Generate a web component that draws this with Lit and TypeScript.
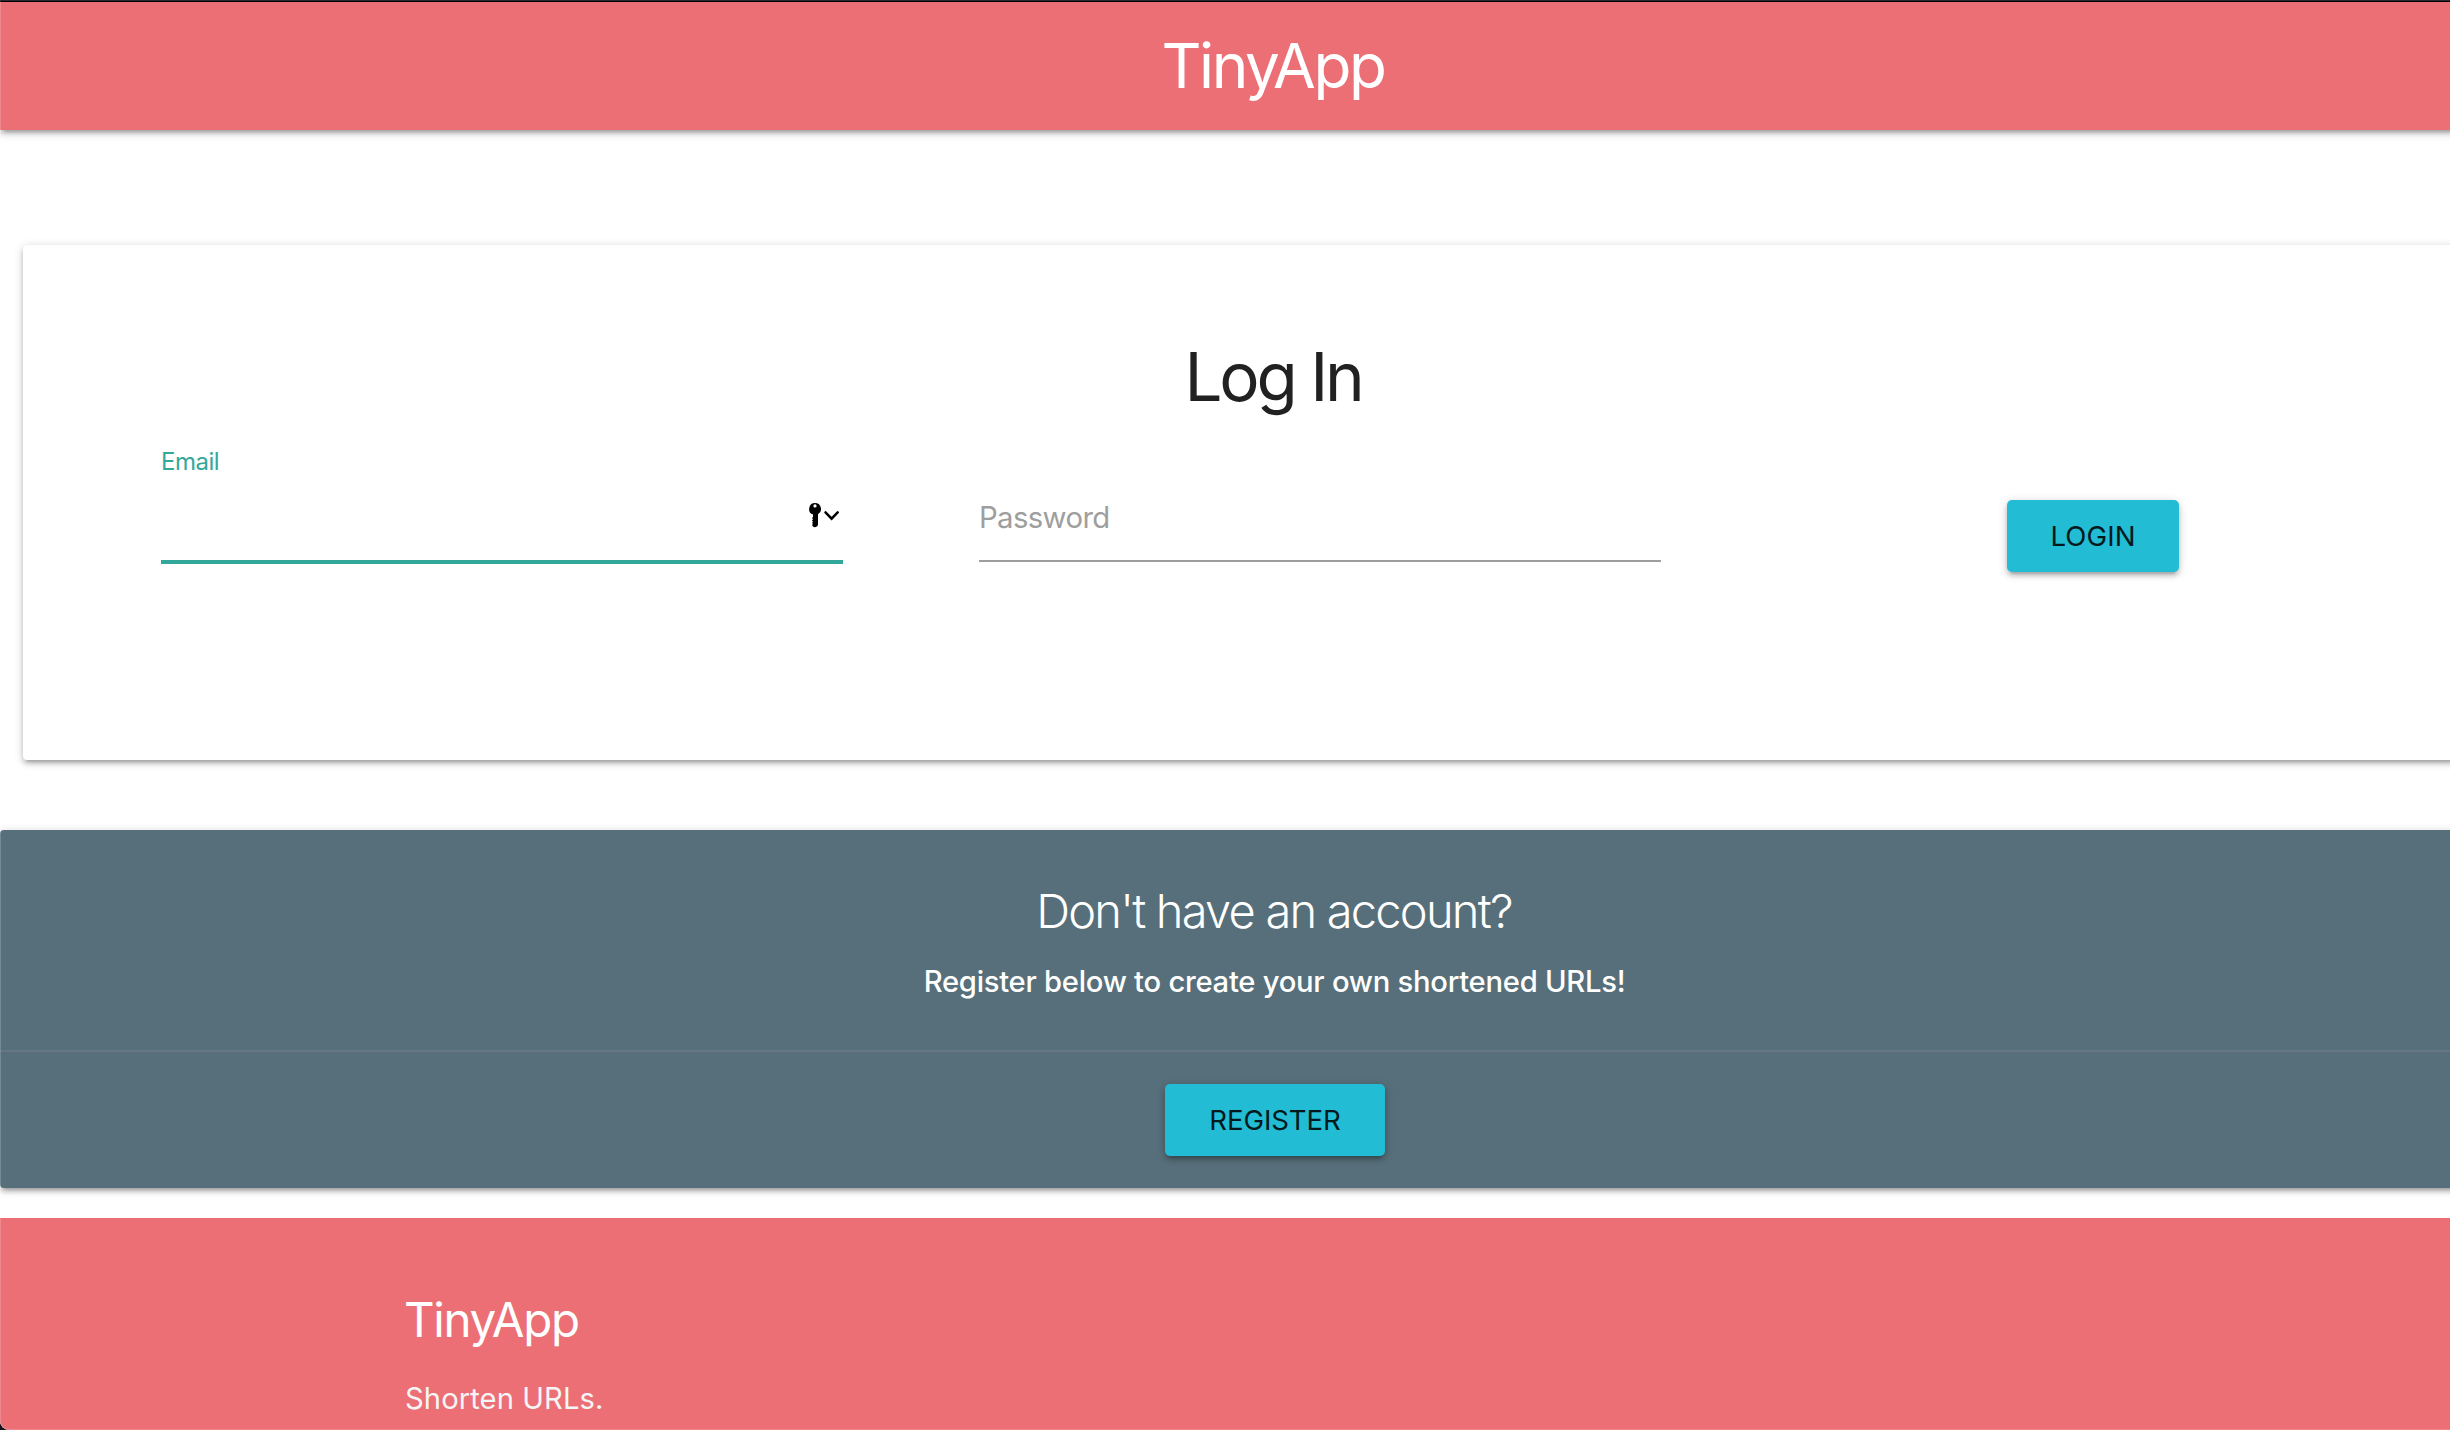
import { LitElement, html, css } from "lit";
import { customElement, property } from "lit/decorators.js";

@customElement("text-field")
export class TextField extends LitElement {
  @property() label = "";
  @property({ type: Boolean }) active = false;

  render() {
    return this.active
      ? html`<div class="field active">
          <label class="label">${this.label}</label>
          <div class="entry">
            <svg class="key" width="36" height="36" viewBox="0 0 36 36" aria-hidden="true">
              <path
                fill="#000"
                fill-rule="evenodd"
                d="M10 6a6 6 0 0 1 3 11.2V27.500a3 3 0 0 1-5.400 1.400l-.6-.8 1-1-1-1.200 1-1.200-1-1.200 1-1.200-1-1.200 1-1.200V17.600A6 6 0 0 1 10 6zm0 1.300a1.600 1.600 0 1 0 0 3.200 1.600 1.600 0 0 0 0-3.200z"
              />
              <path
                fill="none"
                stroke="#000"
                stroke-width="2.500"
                stroke-linecap="round"
                stroke-linejoin="miter"
                d="M20.500 15.300l6.100 6.300 6.100-6.300"
              />
            </svg>
          </div>
        </div>`
      : html`<div class="field">
          <label class="label">${this.label}</label>
        </div>`;
  }

  static styles = css`
    :host {
      display: block;
    }
    .field {
      box-sizing: border-box;
      height: 116px;
      padding-top: 57px;
      border-bottom: 2px solid #9e9e9e;
    }
    .label {
      display: block;
      line-height: 30px;
      font-size: 29.3px;
      letter-spacing: -0.62px;
      color: #9e9e9e;
    }
    .field.active {
      height: 118px;
      padding-top: 1px;
      border-bottom: 4px solid #32a89b;
    }
    .active .label {
      font-size: 24px;
      letter-spacing: -0.5px;
      color: #32a89b;
    }
    .entry {
      display: flex;
      justify-content: flex-end;
      padding: 20px 2px 0 0;
    }
    .key {
      display: block;
    }
  `;
}

@customElement("action-button")
export class ActionButton extends LitElement {
  render() {
    return html`<button class="btn"><slot></slot></button>`;
  }

  static styles = css`
    :host {
      display: block;
    }
    .btn {
      display: block;
      width: 100%;
      height: 72px;
      padding: 0;
      border: 0;
      border-radius: 5px;
      background: #22bcd4;
      color: #04191c;
      font: 400 27.6px/72px Inter, sans-serif;
      letter-spacing: inherit;
      text-align: center;
      box-shadow: 0 4px 4px rgba(0, 0, 0, 0.14), 0 6px 2px -4px rgba(0, 0, 0, 0.12),
        0 2px 10px rgba(0, 0, 0, 0.2);
    }
  `;
}

@customElement("app-root")
export class AppRoot extends LitElement {
  render() {
    return html`
      <div class="page">
        <header class="nav"><span class="logo">TinyApp</span></header>
        <main class="login-card">
          <h1 class="title">Log In</h1>
          <form class="row">
            <text-field label="Email" active></text-field>
            <text-field label="Password"></text-field>
            <action-button class="login">LOGIN</action-button>
          </form>
        </main>
        <section class="register-card">
          <div class="content">
            <h2 class="question">Don't have an account?</h2>
            <p class="hint">Register below to create your own shortened URLs!</p>
          </div>
          <div class="action">
            <action-button class="register">REGISTER</action-button>
          </div>
        </section>
        <footer class="footer">
          <h3 class="footer-title">TinyApp</h3>
          <p class="footer-text">Shorten URLs.</p>
        </footer>
        <div class="edge"></div>
      </div>
    `;
  }

  static styles = css`
    :host {
      display: block;
      height: 1430px;
      overflow: hidden;
      background: #14141e;
      font-family: Inter, sans-serif;
    }
    h1,
    h2,
    h3,
    p {
      margin: 0;
      font-weight: 400;
      white-space: nowrap;
    }
    .page {
      position: relative;
      box-sizing: border-box;
      display: flex;
      flex-direction: column;
      height: 1430px;
      overflow: hidden;
      border-top: 1px solid #2a2a2a;
      border-radius: 0 0 0 9px;
      background: #fff;
    }
    .nav,
    .login-card,
    .register-card,
    .footer {
      flex: none;
      box-sizing: border-box;
      width: 2548px;
    }
    .nav,
    .login-card,
    .register-card {
      box-shadow: 0 4px 4px rgba(0, 0, 0, 0.14), 0 6px 2px -4px rgba(0, 0, 0, 0.12),
        0 2px 10px rgba(0, 0, 0, 0.2);
    }
    .nav {
      height: 129px;
      padding-right: 2px;
      border-top: 1px solid #000;
      background: #ec6f75;
      text-align: center;
    }
    .logo {
      display: block;
      font-size: 62px;
      line-height: 128px;
      letter-spacing: -2.44px;
      color: #fff;
    }
    .login-card {
      height: 515px;
      margin: 115px 0 0 23px;
      padding: 82px 0 0 138px;
      border-radius: 4px;
      background: #fff;
    }
    .title {
      width: 2224px;
      font-size: 67.3px;
      line-height: 99px;
      letter-spacing: -3.25px;
      text-align: center;
      color: #212121;
    }
    .row {
      display: grid;
      grid-template-columns: 682px 682px 382px;
      column-gap: 136px;
      margin: 20px 0 0;
      align-items: start;
    }
    .login {
      width: 172px;
      margin: 54px 0 0 210px;
      letter-spacing: 0.1px;
    }
    .register-card {
      height: 358px;
      margin-top: 70px;
      border-radius: 4px;
      background: #576f7a;
      color: #fff;
      text-align: center;
    }
    .content {
      box-sizing: border-box;
      height: 220px;
      padding-top: 49px;
    }
    .question {
      font-size: 47px;
      font-weight: 300;
      line-height: 64px;
      letter-spacing: -1.77px;
    }
    .hint {
      margin-top: 16px;
      padding-left: 1px;
      font-size: 29.2px;
      font-weight: 500;
      line-height: 45px;
      letter-spacing: -0.26px;
    }
    .action {
      display: flex;
      justify-content: center;
      padding: 32px 0 32px 2px;
      border-top: 2px solid rgba(160, 160, 160, 0.2);
    }
    .register {
      width: 220px;
      letter-spacing: -0.1px;
    }
    .footer {
      flex: 1;
      margin-top: 30px;
      padding: 77px 0 0 404px;
      background: #ec6f75;
      color: #fff;
    }
    .footer-title {
      font-size: 47.5px;
      line-height: 50px;
      letter-spacing: -1.31px;
    }
    .footer-text {
      margin: 32px 0 0 1px;
      font-size: 29.2px;
      line-height: 44px;
      letter-spacing: 0.08px;
      color: #f5f5f5;
    }
    .edge {
      position: absolute;
      inset: 0;
      border-left: 1px solid rgba(255, 255, 255, 0.18);
      border-bottom: 1px solid rgba(255, 255, 255, 0.18);
      border-radius: 0 0 0 9px;
      pointer-events: none;
    }
  `;
}
